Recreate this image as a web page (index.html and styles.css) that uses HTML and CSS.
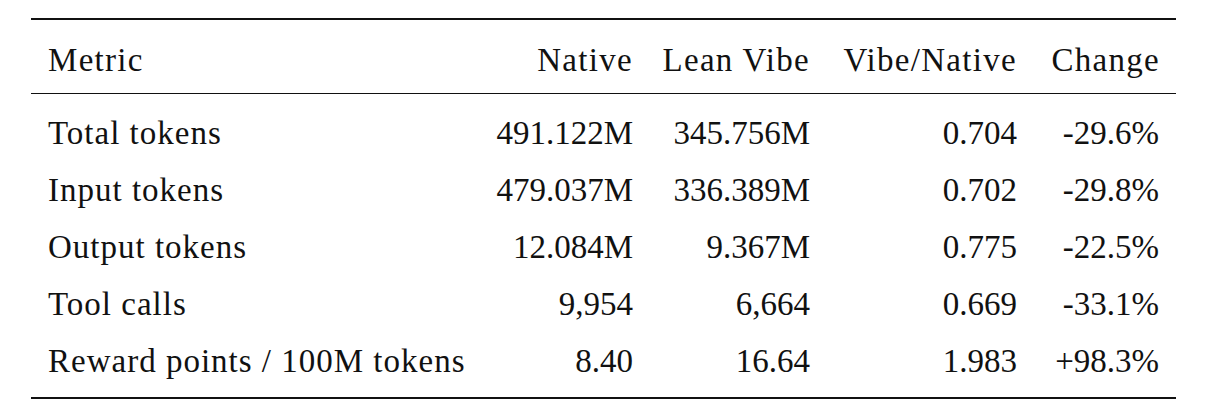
FILE: index.html
```html
<!DOCTYPE html>
<html>
<head>
<meta charset="utf-8">
<link rel="stylesheet" href="styles.css">
</head>
<body>
<table class="results">
  <colgroup>
    <col class="c-metric">
    <col class="c-native">
    <col class="c-lean">
    <col class="c-ratio">
    <col class="c-change">
  </colgroup>
  <thead>
    <tr>
      <th class="left">Metric</th>
      <th>Native</th>
      <th>Lean Vibe</th>
      <th>Vibe/Native</th>
      <th class="last">Change</th>
    </tr>
  </thead>
  <tbody>
    <tr class="first">
      <td class="left">Total tokens</td>
      <td>491.122M</td>
      <td>345.756M</td>
      <td>0.704</td>
      <td class="last">-29.6%</td>
    </tr>
    <tr>
      <td class="left">Input tokens</td>
      <td>479.037M</td>
      <td>336.389M</td>
      <td>0.702</td>
      <td class="last">-29.8%</td>
    </tr>
    <tr>
      <td class="left">Output tokens</td>
      <td>12.084M</td>
      <td>9.367M</td>
      <td>0.775</td>
      <td class="last">-22.5%</td>
    </tr>
    <tr>
      <td class="left">Tool calls</td>
      <td>9,954</td>
      <td>6,664</td>
      <td>0.669</td>
      <td class="last">-33.1%</td>
    </tr>
    <tr class="final">
      <td class="left">Reward points / 100M tokens</td>
      <td>8.40</td>
      <td>16.64</td>
      <td>1.983</td>
      <td class="last">+98.3%</td>
    </tr>
  </tbody>
</table>
</body>
</html>
```
FILE: styles.css
```css
html, body {
  margin: 0;
  padding: 0;
  background: #ffffff;
}
body {
  padding-top: 18px;
  font-family: "Liberation Serif", "DejaVu Serif", serif;
  font-size: 33px;
  color: #111111;
}
.results {
  margin-left: 31px;
  width: 1145px;
  table-layout: fixed;
  border-collapse: collapse;
  border-top: 2px solid #111111;
  border-bottom: 2px solid #111111;
}
.c-metric { width: 449px; }
.c-native { width: 153px; }
.c-lean { width: 177px; }
.c-ratio { width: 207px; }
.c-change { width: 159px; }
.results th,
.results td {
  padding: 0;
  line-height: 57px;
  font-weight: normal;
  text-align: right;
  white-space: nowrap;
}
.results th {
  padding-top: 12px;
  padding-bottom: 4px;
  border-bottom: 1px solid #111111;
  letter-spacing: 1.3px;
}
.results td.left {
  letter-spacing: 1px;
}
.results .left {
  text-align: left;
  padding-left: 17px;
}
.results .last {
  padding-right: 17px;
}
.results th.last {
  padding-right: 16px;
}
.results tr.first td {
  padding-top: 11px;
}
.results tr.final td {
  padding-bottom: 7px;
}
```
